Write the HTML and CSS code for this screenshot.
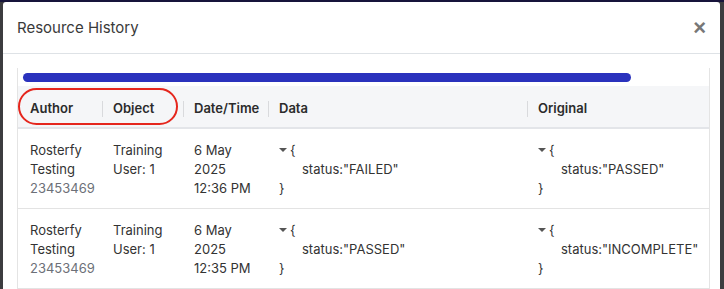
FILE: index.html
```html
<!DOCTYPE html>
<html lang="en">
    <head>
        <meta charset="UTF-8">
        <meta name="viewport" content="width=device-width, initial-scale=1.0">
        <title>Resource History</title>
        <link rel="stylesheet" href="styles.css">
    </head>
    <body>
        <div class="modal">
            <div class="modal-header">
                <h2>Resource History</h2>
                <button class="close-btn">&times;</button>
            </div>
            <div class="modal-body">
                <div class="table-wrap">
                    <div class="scrollbar"><div class="thumb"></div></div>
                    <div class="highlight"></div>
                    <table>
                        <thead>
                            <tr>
                                <th class="col-author">Author</th>
                                <th class="col-object"><span>Object</span></th>
                                <th class="col-date"><span>Date/Time</span></th>
                                <th class="col-data"><span>Data</span></th>
                                <th class="col-orig"><span>Original</span></th>
                            </tr>
                        </thead>
                        <tbody>
                            <tr>
                                <td>Rosterfy<br>Testing<br><span class="muted">23453469</span></td>
                                <td>Training<br>User: 1</td>
                                <td>6 May<br>2025<br>12:36 PM</td>
                                <td><div class="json"><span class="caret"></span>{<div class="prop">status:"FAILED"</div>}</div></td>
                                <td><div class="json"><span class="caret"></span>{<div class="prop">status:"PASSED"</div>}</div></td>
                            </tr>
                            <tr>
                                <td>Rosterfy<br>Testing<br><span class="muted">23453469</span></td>
                                <td>Training<br>User: 1</td>
                                <td>6 May<br>2025<br>12:35 PM</td>
                                <td><div class="json"><span class="caret"></span>{<div class="prop">status:"PASSED"</div>}</div></td>
                                <td><div class="json"><span class="caret"></span>{<div class="prop">status:"INCOMPLETE"</div>}</div></td>
                            </tr>
                        </tbody>
                    </table>
                </div>
            </div>
        </div>
    </body>
</html>
```

FILE: styles.css
```css
body {
    margin: 0;
    height: 289px;
    overflow: hidden;
    font-family: Inter, "Noto Sans", sans-serif;
    color: #333;
    background: linear-gradient(#17143b 0 2px, #3c3c3f 2px);
}
.modal {
    margin: 2px 0 0 3px;
    width: 717px;
    height: 300px;
    background-color: white;
    border-radius: 3px 3px 0 0;
}
.modal-header {
    display: flex;
    justify-content: space-between;
    align-items: center;
    height: 51px;
    padding: 0 14px;
    border-bottom: 1px solid #dee2e6;
}
.modal-header h2 {
    margin: 0;
    font-size: 15px;
    font-weight: 400;
    color: #3a3a3a;
}
.close-btn {
    background: none;
    border: none;
    padding: 0;
    font-family: Arial, sans-serif;
    font-size: 22px;
    font-weight: 700;
    color: #777;
    line-height: 1;
    cursor: pointer;
}
.modal-body {
    padding: 14px 10px 0 14px;
}
.table-wrap {
    position: relative;
    border-left: 1px solid #e4e4e4;
    border-right: 1px solid #e4e4e4;
}
.scrollbar {
    height: 18px;
    padding: 5px 0 0 5px;
    box-sizing: border-box;
}
.thumb {
    width: 608px;
    height: 9px;
    border-radius: 5px;
    background-color: #2a32bd;
}
.highlight {
    position: absolute;
    left: 0;
    top: 20px;
    width: 156px;
    height: 33px;
    border: 2px solid #e5261d;
    border-radius: 19px;
}
table {
    width: 100%;
    border-collapse: collapse;
    table-layout: fixed;
    font-size: 13px;
}
th, td {
    box-sizing: border-box;
}
th {
    height: 42px;
    padding: 2px 0 0 11px;
    background-color: #f5f6f8;
    border-bottom: 2px solid #e3e5e9;
    text-align: left;
    font-weight: 600;
    color: #2b2b2b;
}
th span {
    display: block;
    position: relative;
}
th span::before {
    content: "";
    position: absolute;
    left: -11px;
    top: 1px;
    width: 1px;
    height: 16px;
    background-color: #d9dadd;
}
th.col-author {
    padding-left: 12px;
}
.col-author { width: 84px; }
.col-object { width: 81px; }
.col-date { width: 85px; }
.col-data { width: 259px; }
td {
    padding: 12px 6px 10px 11px;
    line-height: 19px;
    vertical-align: top;
    border-bottom: 1px solid #e3e3e3;
}
td:first-child {
    padding-left: 12px;
}
.muted {
    color: #6c7078;
}
.json {
    color: #333;
}
.caret {
    display: inline-block;
    width: 0;
    height: 0;
    margin: 0 3px 2px 0;
    border-left: 4px solid transparent;
    border-right: 4px solid transparent;
    border-top: 4px solid #555;
    vertical-align: middle;
}
.prop {
    padding-left: 23px;
}
```
